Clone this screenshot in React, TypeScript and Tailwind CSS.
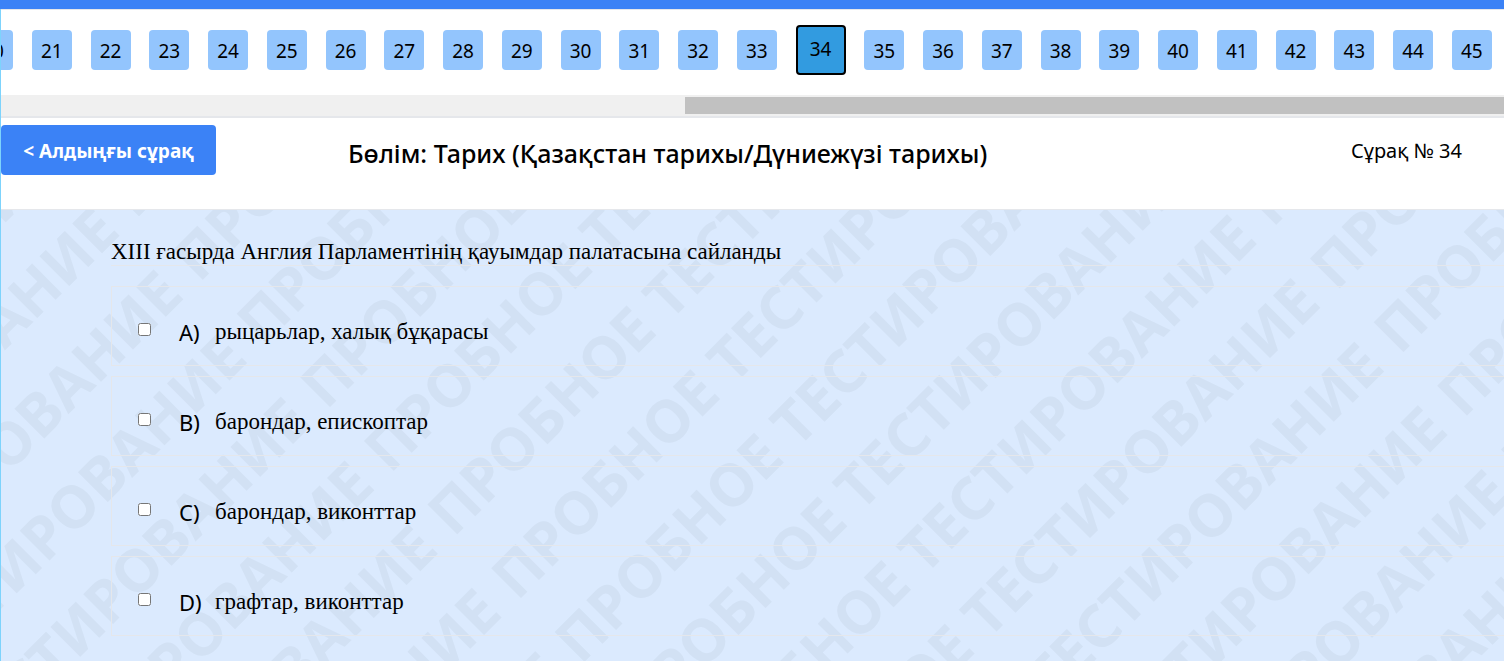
import React, { useState } from "react";

const FIRST_VISIBLE = 20;
const LAST_VISIBLE = 45;
const CURRENT = 34;

const WATERMARK_ROWS = 17;
const WATERMARK_COLUMNS = 3;

const question = {
  section: "Бөлім: Тарих (Қазақстан тарихы/Дүниежүзі тарихы)",
  text: "XIII ғасырда Англия Парламентінің қауымдар палатасына сайланды",
  options: [
    { key: "A", text: "рыцарьлар, халық бұқарасы" },
    { key: "B", text: "барондар, епископтар" },
    { key: "C", text: "барондар, виконттар" },
    { key: "D", text: "графтар, виконттар" },
  ],
};

const QuestionNav: React.FC = () => {
  const numbers = Array.from({ length: LAST_VISIBLE - FIRST_VISIBLE + 1 }, (_, i) => FIRST_VISIBLE + i);

  return (
    <nav className="overflow-hidden border-t border-b-2 border-[#e5e7eb]">
      <div className="-ml-7 mr-3 flex h-[85px] items-start justify-between pt-[15px]">
        {numbers.map((n) =>
          n === CURRENT ? (
            <button
              key={n}
              aria-current="true"
              className="h-[50px] w-[50px] shrink-0 rounded border-2 border-black bg-[#329be0] pb-0.5 text-[19px]"
            >
              {n}
            </button>
          ) : (
            <button key={n} className="mt-[5px] h-10 w-10 shrink-0 rounded bg-[#93c5fd] pt-0.5 text-[19px]">
              {n}
            </button>
          )
        )}
      </div>
      {/* Scroll track */}
      <div className="flex h-[21px] justify-end bg-[#f0f0f0] py-0.5">
        <div className="w-[54.5%] bg-[#c1c1c1]" />
      </div>
    </nav>
  );
};

const Watermark: React.FC = () => (
  <div
    aria-hidden="true"
    className="pointer-events-none absolute top-0 left-0 origin-top-left -rotate-45 font-bold text-[#d2e1f4] select-none"
  >
    <div className="-mt-14 -ml-[710px]">
      {Array.from({ length: WATERMARK_ROWS }, (_, row) => (
        <div key={row} className="flex h-[90px] text-[59px] leading-[90px]">
          {Array.from({ length: WATERMARK_COLUMNS }, (_, col) => (
            <span key={col} className="w-[798px] shrink-0 whitespace-nowrap">
              ПРОБНОЕ ТЕСТИРОВАНИЕ
            </span>
          ))}
        </div>
      ))}
    </div>
  </div>
);

const App: React.FC = () => {
  const [selected, setSelected] = useState<string[]>([]);

  const toggle = (key: string) =>
    setSelected((prev) => (prev.includes(key) ? prev.filter((k) => k !== key) : [...prev, key]));

  return (
    <div className="flex h-screen flex-col overflow-hidden bg-white font-['Noto_Sans',sans-serif] text-black">
      <div className="h-[9px] shrink-0 bg-[#3b82f6]" />

      <div className="flex grow flex-col border-l border-[#7dd3fc]">
        <QuestionNav />

        {/* Header */}
        <header className="flex h-[91px] shrink-0 items-start pt-[7px] pr-[42px]">
          <button className="h-[50px] w-[215px] rounded bg-[#3b82f6] pt-0.5 text-[19px] font-bold text-white">
            &lt; Алдыңғы сұрақ
          </button>
          <h1 className="ml-[132px] pt-3 text-[25px] leading-8 font-medium whitespace-nowrap">
            {question.section}
          </h1>
          <p className="ml-auto pt-3 text-xl whitespace-nowrap">Сұрақ № {CURRENT}</p>
        </header>

        {/* Question */}
        <main className="relative grow overflow-hidden border-t border-[#e5e7eb] bg-[#dbeafe]">
          <Watermark />
          <div className="relative pt-6 pl-[110px]">
            <h2 className="h-8 border-b border-[#e5e7eb] font-['Liberation_Serif',serif] text-[23px] leading-9">
              {question.text}
            </h2>
            <div className="mt-5 flex flex-col gap-2.5">
              {question.options.map((option) => (
                <label
                  key={option.key}
                  className="flex h-20 items-start border-y border-l border-[#e5e7eb] pt-7 pl-[26px]"
                >
                  <input
                    type="checkbox"
                    className="mt-2 h-[13px] w-[13px]"
                    checked={selected.includes(option.key)}
                    onChange={() => toggle(option.key)}
                  />
                  <span className="ml-7 w-9 text-[22px] leading-[34px]">{option.key})</span>
                  <span className="font-['Liberation_Serif',serif] text-[23px] leading-[34px]">{option.text}</span>
                </label>
              ))}
            </div>
          </div>
        </main>
      </div>
    </div>
  );
};

export default App;
